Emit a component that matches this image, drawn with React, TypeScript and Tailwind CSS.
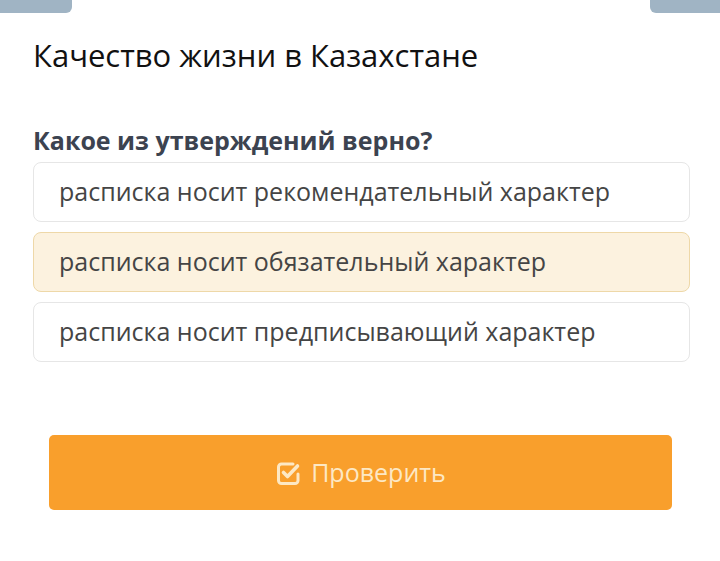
const options = [
  { text: 'расписка носит рекомендательный характер', selected: false },
  { text: 'расписка носит обязательный характер', selected: true },
  { text: 'расписка носит предписывающий характер', selected: false },
]

function CheckSquare() {
  return (
    <svg width="26" height="26" viewBox="0 0 26 26" fill="none" stroke="currentColor" strokeLinecap="round" strokeLinejoin="round">
      <path d="M18 4H6.5A3 3 0 0 0 3.5 7v13.5a3 3 0 0 0 3 3H20a3 3 0 0 0 3-3V14" strokeWidth="3" />
      <path d="M8.5 12.5l4 4L22.5 6" strokeWidth="3.6" />
    </svg>
  )
}

export default function App() {
  return (
    <div className="w-[720px] h-[561px] bg-white relative overflow-hidden font-['Open_Sans',sans-serif]">
      {/* top tabs */}
      <div className="flex justify-between">
        <div className="w-[72px] h-[13px] bg-[#a0b4c4] rounded-br-md" />
        <div className="w-[70px] h-[13px] bg-[#a0b4c4] rounded-bl-md" />
      </div>

      <div className="pl-[33px] pr-[30px] pt-[22px]">
        <h1 className="text-[31px] leading-[40px] text-[#111]">Качество жизни в Казахстане</h1>

        <div className="mt-[49px] text-[25px] leading-[32px] font-bold text-[#3c4350]">Какое из утверждений верно?</div>

        <div className="flex flex-col gap-[10px] mt-[6px]">
          {options.map(o => (
            <div
              key={o.text}
              className={`h-[60px] rounded-lg border flex items-center px-[25px] text-[25px] text-[#454545] ${
                o.selected ? 'bg-[#fcf2df] border-[#eed8a8]' : 'bg-white border-[#e6e6e6]'
              }`}
            >
              {o.text}
            </div>
          ))}
        </div>

        <button className="mt-[73px] ml-[16px] w-[623px] h-[75px] bg-[#f99f2c] rounded-[5px] flex items-center justify-center gap-[10px] text-[25px] text-[#fde8c4]">
          <CheckSquare />
          Проверить
        </button>
      </div>
    </div>
  )
}
